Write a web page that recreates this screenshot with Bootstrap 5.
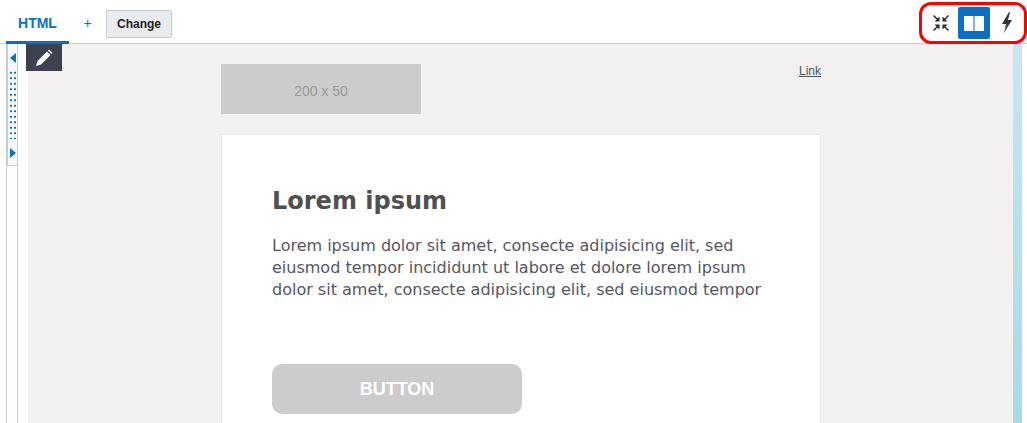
<!DOCTYPE html>
<html lang="en">
<head>
    <meta charset="UTF-8">
    <title>HTML editor</title>
    <link rel="stylesheet" href="https://cdn.jsdelivr.net/npm/bootstrap@5.3.0/dist/css/bootstrap.min.css">
    <style>
        html, body {
            height: 423px;
            overflow: hidden;
            background: #fff;
            font-family: "Liberation Sans", Arial, sans-serif;
        }
        .edit-top {
            height: 44px;
            border-bottom: 1px solid #c5ccd3;
            padding-left: 6px;
        }
        .edit-tab {
            width: 63px;
            height: 44px;
            border-bottom: 3px solid #0b6fc6;
            color: #0b6fc6;
            font-size: 14px;
            font-weight: 700;
            line-height: 47px;
            text-align: center;
        }
        .edit-plus {
            color: #0b6fc6;
            font-size: 14px;
            width: 37px;
            text-align: center;
            line-height: 47px;
        }
        .edit-change {
            width: 66px;
            height: 28px;
            margin-top: 10px;
            padding: 0;
            font-size: 12px;
            font-weight: 700;
            color: #222;
            background: #e9ecef;
            border: 1px solid #c5ced6;
            border-radius: 2px;
        }
        .view-tools {
            width: 108px;
            height: 42px;
            margin-top: 2px;
            border: 3px solid #f00;
            border-radius: 12px;
            padding-left: 3px;
            gap: 1px;
        }
        .view-btn {
            width: 32px;
            height: 32px;
        }
        .view-btn.active-view {
            background: #0b6fc6;
            border-radius: 2px;
        }
        .edit-body {
            height: 379px;
        }
        .side-rail {
            width: 28px;
            padding-left: 6px;
            background: #fff;
        }
        .side-handle {
            width: 12px;
            height: 122px;
            background: #f7f8f9;
            border-left: 2px solid #c5ccd3;
            border-right: 1px solid #c5ccd3;
            border-bottom: 1px solid #c5ccd3;
        }
        .side-line {
            width: 12px;
            height: 257px;
            border-left: 1px solid #c5ccd3;
            border-right: 1px solid #c5ccd3;
        }
        .side-arrow-up {
            margin-top: 9px;
        }
        .side-arrow-down {
            margin-top: 9px;
        }
        .side-dots {
            width: 8px;
            height: 69px;
            margin-top: 7px;
            background-image: radial-gradient(#0b6fc6 0.6px, transparent 0.9px);
            background-size: 4px 5.500px;
        }
        .mail-canvas {
            background: #f2f1ef;
            position: relative;
        }
        .pen-btn {
            position: absolute;
            left: -2px;
            top: 0;
            width: 36px;
            height: 27px;
            background: #3d4250;
        }
        .scroll-strip {
            width: 9px;
            background: linear-gradient(#c7e5f6, #a8d9ea);
            margin-right: 5px;
        }
        .mail-col {
            width: 600px;
            margin-left: 193px;
            padding-top: 20px;
        }
        .logo-box {
            width: 200px;
            height: 50px;
            background: #cccccc;
            color: #999;
            font-size: 14px;
            line-height: 54px;
            text-align: center;
        }
        .top-link {
            font-size: 12px;
            color: #4a5666;
            line-height: 14px;
        }
        .mail-card {
            margin-top: 20px;
            height: 289px;
            background: #fff;
            border: 1px solid #e9e9e9;
            border-bottom: 0;
            padding: 51px 50px 0;
            font-family: "DejaVu Sans", sans-serif;
        }
        .mail-title {
            color: #505050;
            font-size: 24px;
            font-weight: 700;
            line-height: 30px;
            margin: 0 0 19px;
            font-family: "DejaVu Sans", sans-serif;
        }
        .mail-text {
            color: #555566;
            font-size: 16px;
            line-height: 22px;
            margin: 0 0 63px;
        }
        .mail-button {
            width: 250px;
            height: 50px;
            background: #cccccc;
            color: #fff;
            border: 0;
            border-radius: 10px;
            font-family: "Liberation Sans", Arial, sans-serif;
            font-size: 18px;
            font-weight: 700;
            padding: 0;
        }
    </style>
</head>
<body>
    <div class="edit-top d-flex">
        <div class="edit-tab">HTML</div>
        <div class="edit-plus">+</div>
        <button class="edit-change" type="button">Change</button>
        <div class="view-tools d-flex align-items-center ms-auto">
            <div class="view-btn d-flex align-items-center justify-content-center">
                <svg width="16" height="16" viewBox="0 0 16 16" fill="#2b2b2b" stroke="#2b2b2b">
                    <path d="M0.500 0.500l4 4M15.500 0.500l-4 4M0.500 15.500l4-4M15.500 15.500l-4-4" stroke-width="1.500" fill="none"/>
                    <path d="M6.500 6.500h-5l5-5zM9.500 6.500h5l-5-5zM6.500 9.500h-5l5 5zM9.500 9.500h5l-5 5z" stroke="none"/>
                </svg>
            </div>
            <div class="view-btn active-view d-flex align-items-center justify-content-center">
                <svg width="20" height="15" viewBox="0 0 20 15" fill="#fff">
                    <path d="M0 0h9.500v15H0zM10.500 0H20v15h-9.500z"/>
                </svg>
            </div>
            <div class="view-btn d-flex align-items-center justify-content-center">
                <svg width="10" height="22" viewBox="0 0 10 22">
                    <defs>
                        <linearGradient id="boltFill" x1="0" y1="0" x2="0" y2="1">
                            <stop offset="0.500" stop-color="#333"/>
                            <stop offset="1" stop-color="#888"/>
                        </linearGradient>
                    </defs>
                    <path fill="url(#boltFill)" d="M7 0L0 12h4L1.500 22 10 8H6l2-8z"/>
                </svg>
            </div>
        </div>
    </div>

    <div class="edit-body d-flex">
        <div class="side-rail flex-shrink-0">
            <div class="side-handle d-flex flex-column align-items-center">
                <svg class="side-arrow-up" width="6" height="10" viewBox="0 0 6 10" fill="#0b6fc6"><path d="M6 0v10L0 5z"/></svg>
                <div class="side-dots"></div>
                <svg class="side-arrow-down" width="6" height="10" viewBox="0 0 6 10" fill="#0b6fc6"><path d="M0 0v10l6-5z"/></svg>
            </div>
            <div class="side-line"></div>
        </div>
        <div class="mail-canvas flex-grow-1">
            <div class="pen-btn d-flex align-items-center justify-content-center">
                <svg width="18" height="18" viewBox="0 0 18 18" fill="#fff">
                    <path d="M1 17l1.500-5L12 2.500l3.500 3.500L6 15.500zM13 1.500l1-1 3.500 3.500-1 1z"/>
                </svg>
            </div>
            <div class="mail-col">
                <div class="d-flex justify-content-between align-items-start">
                    <div class="logo-box">200 x 50</div>
                    <a class="top-link" href="#">Link</a>
                </div>
                <div class="mail-card">
                    <h1 class="mail-title">Lorem ipsum</h1>
                    <p class="mail-text">Lorem ipsum dolor sit amet, consecte adipisicing elit, sed eiusmod tempor incididunt ut labore et dolore lorem ipsum dolor sit amet, consecte adipisicing elit, sed eiusmod tempor</p>
                    <button class="mail-button" type="button">BUTTON</button>
                </div>
            </div>
        </div>
        <div class="scroll-strip flex-shrink-0"></div>
    </div>

    <script src="https://cdn.jsdelivr.net/npm/bootstrap@5.3.0/dist/js/bootstrap.bundle.min.js"></script>
</body>
</html>
